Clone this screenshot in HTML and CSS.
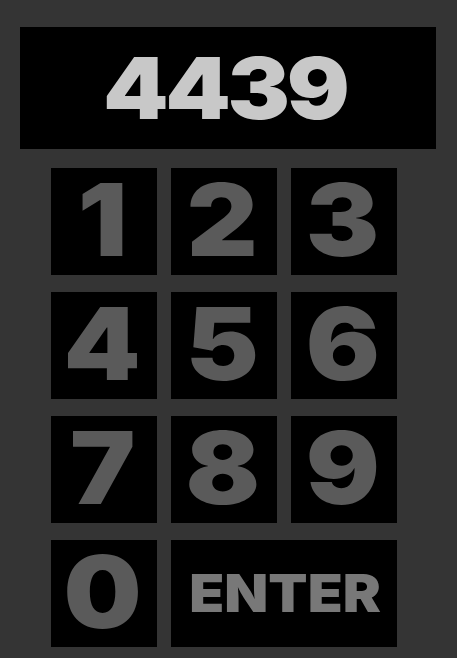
FILE: index.html
```html
<!DOCTYPE html>
<html>
<head>
<meta charset="utf-8">
<link rel="stylesheet" href="styles.css">
</head>
<body>
<div class="lock">
  <div class="display"><span class="wide">4439</span></div>
  <div class="keypad">
    <div class="key"><span class="wide">1</span></div>
    <div class="key"><span class="wide">2</span></div>
    <div class="key"><span class="wide">3</span></div>
    <div class="key"><span class="wide">4</span></div>
    <div class="key"><span class="wide">5</span></div>
    <div class="key"><span class="wide">6</span></div>
    <div class="key"><span class="wide">7</span></div>
    <div class="key"><span class="wide">8</span></div>
    <div class="key"><span class="wide">9</span></div>
    <div class="key"><span class="wide">0</span></div>
    <div class="key enter"><span class="wide">ENTER</span></div>
  </div>
</div>
</body>
</html>
```
FILE: styles.css
```css
html, body {
  margin: 0;
  padding: 0;
  background: #343434;
  height: 100%;
}
body {
  font-family: Inter, "DejaVu Sans", sans-serif;
  font-weight: 900;
}
.lock {
  padding-top: 27px;
  display: flex;
  flex-direction: column;
}
.wide {
  display: inline-block;
  transform: scaleX(1.1);
}
.display {
  margin-left: 20px;
  width: 416px;
  height: 122px;
  background: #000;
  color: #c8c8c8;
  font-size: 85px;
  display: flex;
  align-items: center;
  justify-content: center;
  letter-spacing: -3px;
}
.display .wide {
  margin-left: -6px;
}
.keypad {
  margin-top: 19px;
  margin-left: 51px;
  display: grid;
  grid-template-columns: repeat(3, 106px);
  grid-auto-rows: 107px;
  column-gap: 14px;
  row-gap: 17px;
}
.key {
  background: #000;
  color: #5a5a5a;
  font-size: 100px;
  display: flex;
  align-items: center;
  justify-content: center;
}
.key .wide {
  margin-top: -4px;
  margin-left: -3px;
}
.enter {
  grid-column: span 2;
  font-size: 52px;
  color: #787878;
}
.enter .wide {
  margin-top: 0;
  margin-left: 2px;
}
```
